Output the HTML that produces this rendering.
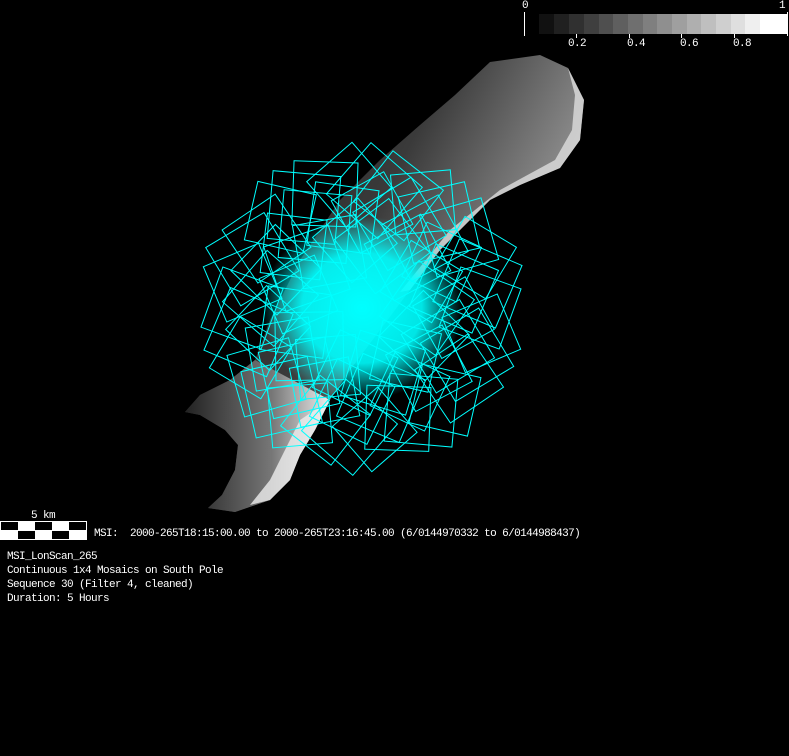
<!DOCTYPE html>
<html><head><meta charset="utf-8"><style>
html,body{margin:0;padding:0;background:#000;width:789px;height:756px;overflow:hidden}
.t{position:absolute;color:#fff;font-family:"Liberation Mono",monospace;font-size:11px;letter-spacing:-0.6px;line-height:14px;white-space:pre}
</style></head><body>
<svg width="789" height="756" style="position:absolute;left:0;top:0" xmlns="http://www.w3.org/2000/svg">
<defs>
<linearGradient id="ag" x1="0" y1="0" x2="1" y2="0.6">
<stop offset="0" stop-color="#151515"/><stop offset="0.5" stop-color="#3a3a3a"/><stop offset="0.8" stop-color="#8a8a8a"/><stop offset="1" stop-color="#e8e8e8"/>
</linearGradient>
<linearGradient id="tg" x1="0" y1="0" x2="1" y2="0">
<stop offset="0" stop-color="#222"/><stop offset="0.6" stop-color="#777"/><stop offset="1" stop-color="#eee"/>
</linearGradient>
<radialGradient id="cg" cx="0.5" cy="0.5" r="0.5">
<stop offset="0" stop-color="#00ffff" stop-opacity="1"/><stop offset="0.6" stop-color="#00ffff" stop-opacity="0.9"/><stop offset="1" stop-color="#00ffff" stop-opacity="0"/>
</radialGradient>
<rect id="a" x="-32" y="-32" width="64" height="64" transform="rotate(20)" fill="none" stroke="#00ffff" stroke-width="1"/>
<rect id="b" x="-30" y="-30" width="60" height="60" transform="rotate(55)" fill="none" stroke="#00ffff" stroke-width="1"/>
<rect id="c" x="-34" y="-34" width="68" height="68" transform="rotate(35)" fill="none" stroke="#00ffff" stroke-width="1"/>
</defs>
<g>
<rect x="539" y="14" width="15" height="20" fill="#111"/>
<rect x="554" y="14" width="15" height="20" fill="#202020"/>
<rect x="569" y="14" width="15" height="20" fill="#303030"/>
<rect x="584" y="14" width="15" height="20" fill="#3f3f3f"/>
<rect x="599" y="14" width="14" height="20" fill="#4f4f4f"/>
<rect x="613" y="14" width="15" height="20" fill="#5f5f5f"/>
<rect x="628" y="14" width="15" height="20" fill="#6f6f6f"/>
<rect x="643" y="14" width="14" height="20" fill="#7f7f7f"/>
<rect x="657" y="14" width="15" height="20" fill="#8f8f8f"/>
<rect x="672" y="14" width="15" height="20" fill="#9f9f9f"/>
<rect x="687" y="14" width="14" height="20" fill="#afafaf"/>
<rect x="701" y="14" width="15" height="20" fill="#bfbfbf"/>
<rect x="716" y="14" width="15" height="20" fill="#cfcfcf"/>
<rect x="731" y="14" width="14" height="20" fill="#dfdfdf"/>
<rect x="745" y="14" width="15" height="20" fill="#efefef"/>
<rect x="760" y="14" width="28" height="20" fill="#fff"/>
<rect x="524" y="12" width="1" height="24" fill="#fff"/>
<rect x="787" y="12" width="1" height="24" fill="#fff"/>
<rect x="576" y="34" width="1" height="4" fill="#fff"/>
<rect x="629" y="34" width="1" height="4" fill="#fff"/>
<rect x="681" y="34" width="1" height="4" fill="#fff"/>
<rect x="734" y="34" width="1" height="4" fill="#fff"/>
</g>
<path d="M490,62 L540,55 L568,68 L584,100 L580,140 L560,168 L520,185 L490,200 L465,225 L440,250 L410,290 L380,330 L350,370 L330,400 L315,430 L300,455 L290,480 L270,500 L235,512 L208,508 L222,495 L235,470 L238,445 L225,430 L200,415 L185,412 L200,395 L230,380 L255,360 L270,320 L300,260 L340,200 L380,160 L420,125 L455,95 Z" fill="url(#ag)"/>
<path d="M185,412 L200,395 L230,380 L255,360 L330,400 L315,430 L300,455 L290,480 L270,500 L235,512 L208,508 L222,495 L235,470 L238,445 L225,430 L200,415 Z" fill="url(#tg)"/>
<path d="M568,68 L584,100 L580,140 L560,168 L520,185 L490,200 L465,225 L440,250 L410,290 L400,292 L450,230 L500,190 L555,160 L572,130 L575,95 Z" fill="#ddd" opacity="0.8"/>
<path d="M330,400 L315,430 L300,455 L290,480 L270,500 L250,505 L270,480 L285,450 L300,420 Z" fill="#eee" opacity="0.8"/>
<g transform="translate(362,308)">
<ellipse cx="0" cy="0" rx="100" ry="92" fill="url(#cg)"/>
<g transform="rotate(0)"><use href="#a" x="118"/></g>
<g transform="rotate(12)"><use href="#b" x="122"/></g>
<g transform="rotate(24)"><use href="#c" x="115"/></g>
<g transform="rotate(36)"><use href="#a" x="120"/></g>
<g transform="rotate(48)"><use href="#b" x="124"/></g>
<g transform="rotate(60)"><use href="#c" x="118"/></g>
<g transform="rotate(72)"><use href="#a" x="116"/></g>
<g transform="rotate(84)"><use href="#b" x="122"/></g>
<g transform="rotate(96)"><use href="#c" x="120"/></g>
<g transform="rotate(108)"><use href="#a" x="118"/></g>
<g transform="rotate(120)"><use href="#b" x="124"/></g>
<g transform="rotate(132)"><use href="#c" x="120"/></g>
<g transform="rotate(144)"><use href="#a" x="118"/></g>
<g transform="rotate(156)"><use href="#b" x="122"/></g>
<g transform="rotate(168)"><use href="#c" x="116"/></g>
<g transform="rotate(180)"><use href="#a" x="120"/></g>
<g transform="rotate(192)"><use href="#b" x="122"/></g>
<g transform="rotate(204)"><use href="#c" x="120"/></g>
<g transform="rotate(216)"><use href="#a" x="118"/></g>
<g transform="rotate(228)"><use href="#b" x="122"/></g>
<g transform="rotate(240)"><use href="#c" x="116"/></g>
<g transform="rotate(252)"><use href="#a" x="120"/></g>
<g transform="rotate(264)"><use href="#b" x="124"/></g>
<g transform="rotate(276)"><use href="#c" x="118"/></g>
<g transform="rotate(288)"><use href="#a" x="118"/></g>
<g transform="rotate(300)"><use href="#b" x="122"/></g>
<g transform="rotate(312)"><use href="#c" x="115"/></g>
<g transform="rotate(324)"><use href="#a" x="120"/></g>
<g transform="rotate(336)"><use href="#b" x="124"/></g>
<g transform="rotate(348)"><use href="#c" x="118"/></g>
<g transform="rotate(6)"><use href="#b" x="92"/></g>
<g transform="rotate(24)"><use href="#c" x="94"/></g>
<g transform="rotate(42)"><use href="#a" x="90"/></g>
<g transform="rotate(60)"><use href="#b" x="96"/></g>
<g transform="rotate(78)"><use href="#c" x="92"/></g>
<g transform="rotate(96)"><use href="#a" x="94"/></g>
<g transform="rotate(114)"><use href="#b" x="92"/></g>
<g transform="rotate(132)"><use href="#c" x="94"/></g>
<g transform="rotate(150)"><use href="#a" x="92"/></g>
<g transform="rotate(168)"><use href="#b" x="96"/></g>
<g transform="rotate(186)"><use href="#c" x="92"/></g>
<g transform="rotate(204)"><use href="#a" x="94"/></g>
<g transform="rotate(222)"><use href="#b" x="92"/></g>
<g transform="rotate(240)"><use href="#c" x="94"/></g>
<g transform="rotate(258)"><use href="#a" x="92"/></g>
<g transform="rotate(276)"><use href="#b" x="96"/></g>
<g transform="rotate(294)"><use href="#c" x="92"/></g>
<g transform="rotate(312)"><use href="#a" x="94"/></g>
<g transform="rotate(330)"><use href="#b" x="92"/></g>
<g transform="rotate(348)"><use href="#c" x="94"/></g>
<g transform="rotate(0)"><use href="#c" x="65"/></g>
<g transform="rotate(24)"><use href="#a" x="68"/></g>
<g transform="rotate(48)"><use href="#b" x="65"/></g>
<g transform="rotate(72)"><use href="#c" x="68"/></g>
<g transform="rotate(96)"><use href="#a" x="65"/></g>
<g transform="rotate(120)"><use href="#b" x="68"/></g>
<g transform="rotate(144)"><use href="#c" x="65"/></g>
<g transform="rotate(168)"><use href="#a" x="68"/></g>
<g transform="rotate(192)"><use href="#b" x="65"/></g>
<g transform="rotate(216)"><use href="#c" x="68"/></g>
<g transform="rotate(240)"><use href="#a" x="65"/></g>
<g transform="rotate(264)"><use href="#b" x="68"/></g>
<g transform="rotate(288)"><use href="#c" x="65"/></g>
<g transform="rotate(312)"><use href="#a" x="68"/></g>
<g transform="rotate(336)"><use href="#b" x="65"/></g>
</g>
<rect x="0" y="521" width="87" height="19" fill="#fff"/>
<rect x="1" y="522" width="17" height="8" fill="#000"/>
<rect x="35" y="522" width="17" height="8" fill="#000"/>
<rect x="69" y="522" width="17" height="8" fill="#000"/>
<rect x="18" y="531" width="17" height="8" fill="#000"/>
<rect x="52" y="531" width="17" height="8" fill="#000"/>
</svg>
<div class="t" style="left:522px;top:-1px">0</div>
<div class="t" style="left:779px;top:-1px">1</div>
<div class="t" style="left:568px;top:37px">0.2</div>
<div class="t" style="left:627px;top:37px">0.4</div>
<div class="t" style="left:680px;top:37px">0.6</div>
<div class="t" style="left:733px;top:37px">0.8</div>
<div class="t" style="left:31px;top:509px">5 km</div>
<div class="t" style="left:94px;top:527px">MSI:  2000-265T18:15:00.00 to 2000-265T23:16:45.00 (6/0144970332 to 6/0144988437)</div>
<div class="t" style="left:7px;top:550px">MSI_LonScan_265
Continuous 1x4 Mosaics on South Pole
Sequence 30 (Filter 4, cleaned)
Duration: 5 Hours</div>
</body></html>
